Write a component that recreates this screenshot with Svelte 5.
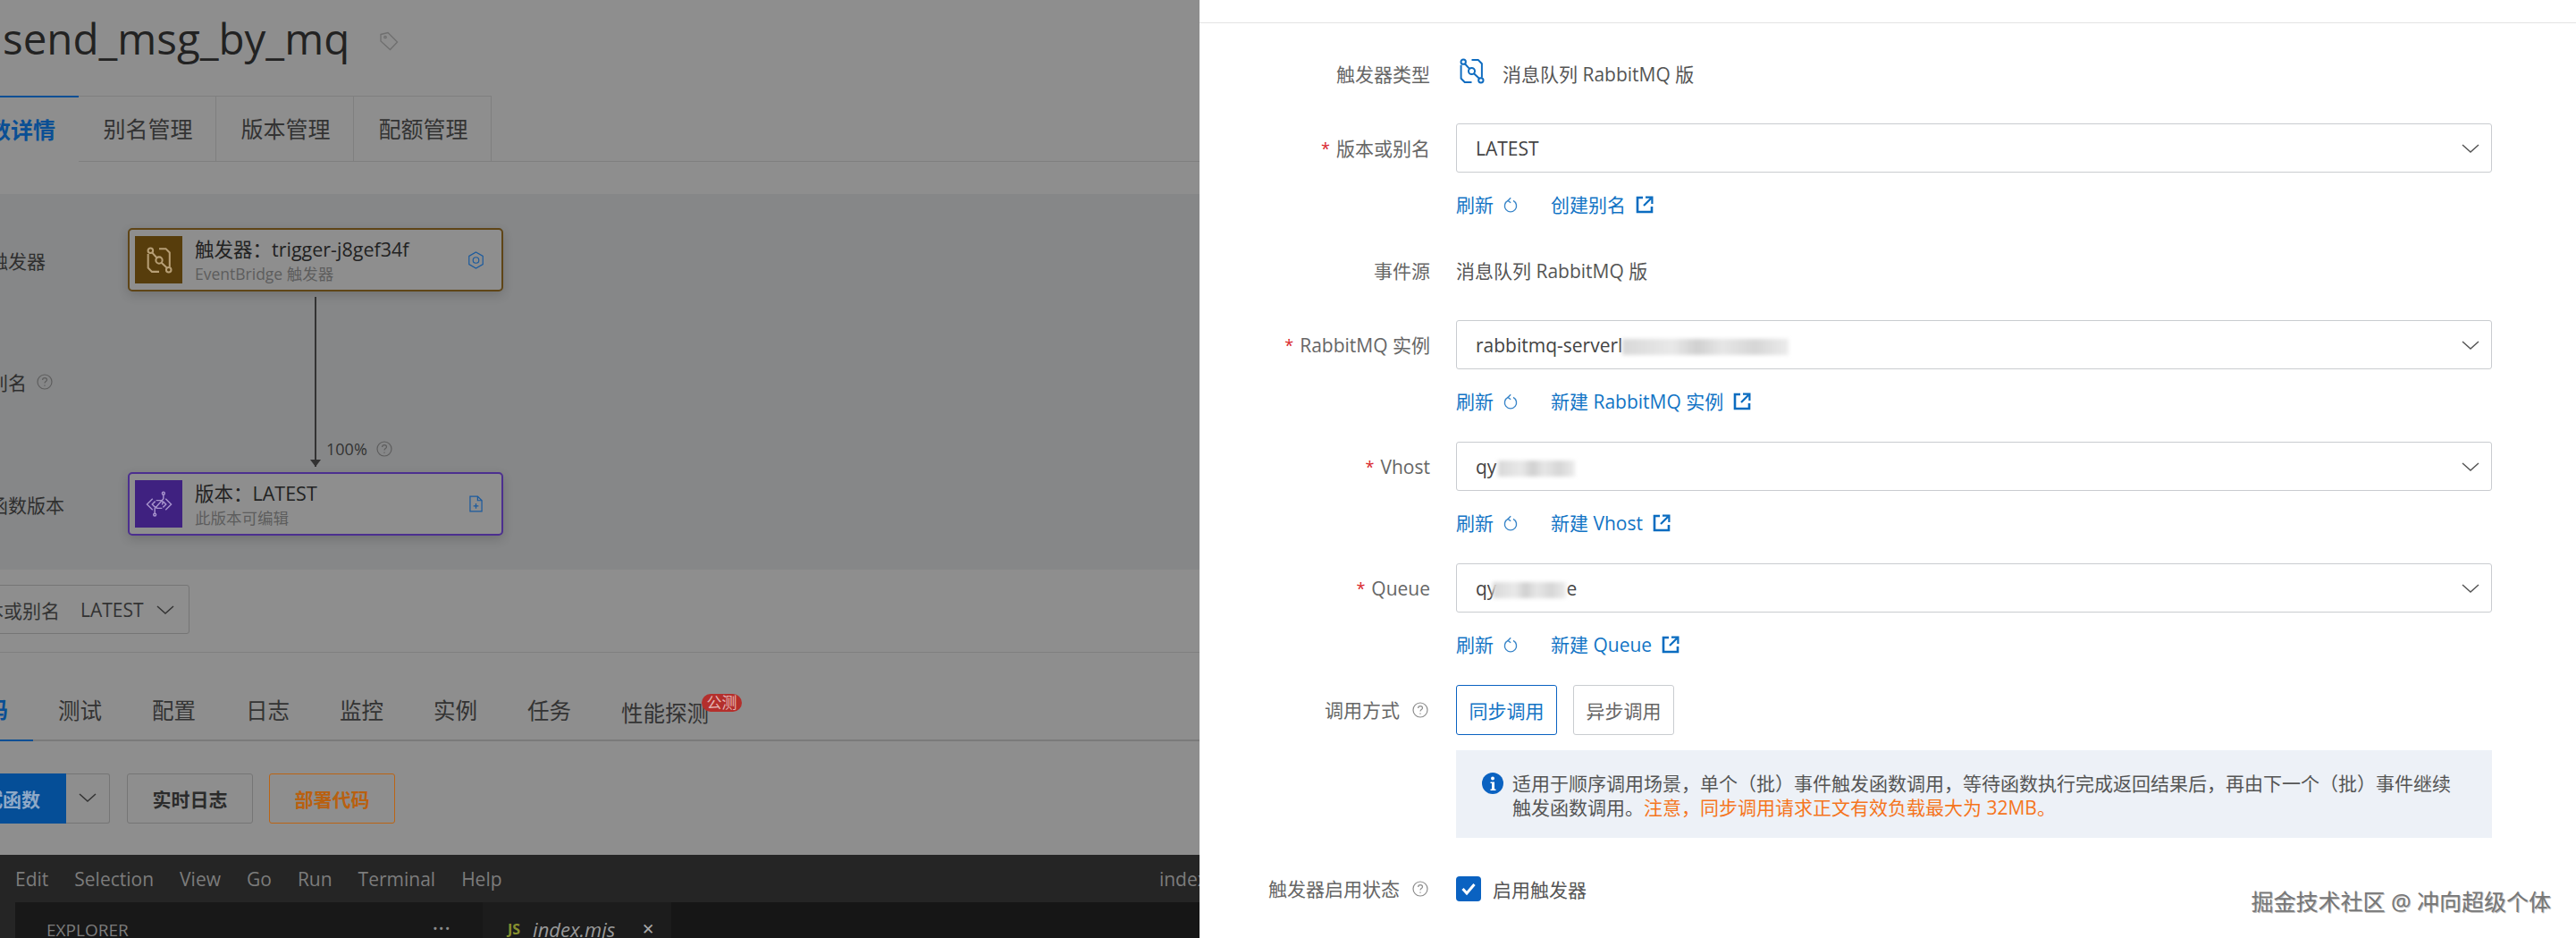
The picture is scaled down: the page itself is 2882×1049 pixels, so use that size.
<script>
  const pageTabs = ['别名管理', '版本管理', '配额管理'];
  const subTabs = ['测试', '配置', '日志', '监控', '实例', '任务'];
  const menus = ['Edit', 'Selection', 'View', 'Go', 'Run', 'Terminal', 'Help'];
</script>

{#snippet help(cls = '')}
  <svg class="help {cls}" viewBox="0 0 18 18" fill="none" stroke="currentColor" stroke-width="1.2">
    <circle cx="9" cy="9" r="8" />
    <path d="M6.6 7c0-1.5 1.1-2.4 2.5-2.4s2.4.9 2.4 2.1c0 1.9-2.5 1.9-2.5 3.9" />
    <path d="M9 12.4v1.4" />
  </svg>
{/snippet}

{#snippet chevron()}
  <svg class="chevron" viewBox="0 0 20 10" fill="none" stroke="currentColor" stroke-width="1.5"><path d="M1 1l9 8 9-8" /></svg>
{/snippet}

{#snippet flowIcon()}
  <svg viewBox="0 0 28 28" fill="none" stroke="currentColor" stroke-width="1.9">
    <circle cx="5" cy="4" r="2.6" />
    <circle cx="14" cy="14" r="3.4" />
    <circle cx="24" cy="24" r="2.6" />
    <path d="M6.6 6l5 5.4M16.4 16.6l5.8 5.4" />
    <path d="M2.5 7.5V22l4 4H14M14 2h7l4 4v15" />
  </svg>
{/snippet}

{#snippet refreshLink()}
  <span class="link">刷新
    <svg class="refresh" viewBox="0 0 16 18" fill="none" stroke="currentColor" stroke-width="1.4">
      <path d="M5 4.4a6.6 6.6 0 1 0 6 0" />
      <path d="M8.2 1.2L5 4.4l3.2 2.4" />
    </svg>
  </span>
{/snippet}

{#snippet extLink(text)}
  <span class="link">{text}
    <svg class="ext" viewBox="0 0 20 20" fill="none" stroke="currentColor" stroke-width="2.6">
      <path d="M8 2H2v16h16v-6" />
      <path d="M9 11l8-8M11 1.6h7.4V9" stroke-width="2.2" />
    </svg>
  </span>
{/snippet}

<div class="screen">
  <!-- page behind the drawer -->
  <section class="page">
    <header class="title-row">
      <h1>send_msg_by_mq</h1>
      <svg class="tag" viewBox="0 0 22 22" fill="none" stroke="currentColor" stroke-width="1.3">
        <path d="M2 3.5L10 1.5l10.5 10.5-8 8.5L2 11z" />
        <circle cx="7" cy="6.5" r="1.2" />
      </svg>
    </header>

    <nav class="page-tabs">
      <span class="page-tab active">函数详情</span>
      {#each pageTabs as tab}
        <span class="page-tab">{tab}</span>
      {/each}
      <span class="page-tabs-rest"></span>
    </nav>

    <div class="diagram">
      <div class="diagram-label">触发器</div>
      <div class="node trigger">
        <div class="node-icon">{@render flowIcon()}</div>
        <div class="node-text">
          <div class="node-title">触发器：trigger-j8gef34f</div>
          <div class="node-sub">EventBridge 触发器</div>
        </div>
        <svg class="node-action" viewBox="0 0 20 22" fill="none" stroke="currentColor" stroke-width="1.3">
          <path d="M10 1l8.5 5v10L10 21l-8.5-5V6z" />
          <circle cx="10" cy="11" r="3.6" />
        </svg>
      </div>

      <div class="diagram-label">别名 {@render help()}</div>
      <div class="edge">
        <span class="edge-line"></span>
        <span class="edge-percent">100% {@render help()}</span>
      </div>

      <div class="diagram-label">函数版本</div>
      <div class="node version">
        <div class="node-icon">
          <svg viewBox="0 0 31 31" fill="none" stroke="currentColor" stroke-width="1.5">
            <path d="M8 9l-6.500 6.500L8 22M11 12l-3.500 3.500L11 19M23 9l6.500 6.500L23 22M20 12l3.500 3.500L20 19" />
            <path d="M20.500 4v5l-10 11.500V26" />
            <path d="M12 11h6l2 2-1 3M19 20h-6l-2-2" />
            <circle cx="20.500" cy="2.800" r="1.500" />
            <circle cx="10.500" cy="27.500" r="1.500" />
          </svg>
        </div>
        <div class="node-text">
          <div class="node-title">版本：LATEST</div>
          <div class="node-sub">此版本可编辑</div>
        </div>
        <svg class="node-action doc" viewBox="0 0 16 20" fill="none" stroke="currentColor" stroke-width="1.3">
          <path d="M1 1h9l5 5v13H1z" />
          <path d="M10 1v5h5M8 9.500v6M5 12.500h6" />
        </svg>
      </div>
    </div>

    <div class="version-select">
      <span>版本或别名</span>
      <span class="version-value">LATEST</span>
      {@render chevron()}
    </div>

    <nav class="sub-tabs">
      <span class="sub-tab active">代码</span>
      {#each subTabs as tab}
        <span class="sub-tab">{tab}</span>
      {/each}
      <span class="sub-tab beta">性能探测<em>公测</em></span>
    </nav>

    <div class="actions">
      <span class="btn-run">测试函数</span>
      <span class="btn-more">{@render chevron()}</span>
      <span class="btn">实时日志</span>
      <span class="btn deploy">部署代码</span>
    </div>

    <div class="ide">
      <div class="ide-menu">
        {#each menus as item}
          <span>{item}</span>
        {/each}
        <span class="ide-file">index.mjs</span>
      </div>
      <div class="ide-body">
        <div class="explorer">
          <span>EXPLORER</span>
          <span class="dots">···</span>
        </div>
        <div class="editor-tab">
          <b>JS</b>
          <i>index.mjs</i>
          <span class="close">✕</span>
        </div>
      </div>
    </div>
  </section>

  <!-- trigger drawer -->
  <aside class="drawer">
    <div class="drawer-top"></div>
    <form class="form">
      <div class="row type-row">
        <div class="label">触发器类型</div>
        <div class="control type-value">
          <span class="type-icon">{@render flowIcon()}</span>
          消息队列 RabbitMQ 版
        </div>
      </div>

      <div class="row select-row">
        <div class="label"><i>*</i>版本或别名</div>
        <div class="select"><span>LATEST</span>{@render chevron()}</div>
      </div>
      <div class="row links">
        <div></div>
        <div class="link-line">{@render refreshLink()}{@render extLink('创建别名')}</div>
      </div>

      <div class="row source-row">
        <div class="label">事件源</div>
        <div class="control">消息队列 RabbitMQ 版</div>
      </div>

      <div class="row select-row instance">
        <div class="label"><i>*</i>RabbitMQ 实例</div>
        <div class="select"><span>rabbitmq-serverl<span class="smudge wide"></span></span>{@render chevron()}</div>
      </div>
      <div class="row links">
        <div></div>
        <div class="link-line">{@render refreshLink()}{@render extLink('新建 RabbitMQ 实例')}</div>
      </div>

      <div class="row select-row">
        <div class="label"><i>*</i>Vhost</div>
        <div class="select"><span>qy<span class="smudge vhost"></span></span>{@render chevron()}</div>
      </div>
      <div class="row links">
        <div></div>
        <div class="link-line">{@render refreshLink()}{@render extLink('新建 Vhost')}</div>
      </div>

      <div class="row select-row">
        <div class="label"><i>*</i>Queue</div>
        <div class="select"><span>qy<span class="smudge queue"></span>e</span>{@render chevron()}</div>
      </div>
      <div class="row links">
        <div></div>
        <div class="link-line">{@render refreshLink()}{@render extLink('新建 Queue')}</div>
      </div>

      <div class="row mode-row">
        <div class="label">调用方式{@render help('label-help')}</div>
        <div class="mode-buttons">
          <span class="mode selected">同步调用</span>
          <span class="mode">异步调用</span>
        </div>
      </div>
      <div class="row alert-row">
        <div></div>
        <div class="alert">
          <svg class="info" viewBox="0 0 24 24">
            <circle cx="12" cy="12" r="12" fill="#0a62c1" />
            <circle cx="12" cy="6.500" r="2" fill="#fff" />
            <path d="M9.500 10.500H14v8h1.500v1.500h-6v-1.500H11v-6.500H9.500z" fill="#fff" />
          </svg>
          <p>适用于顺序调用场景，单个（批）事件触发函数调用，等待函数执行完成返回结果后，再由下一个（批）事件继续触发函数调用。<span class="warn">注意，同步调用请求正文有效负载最大为 32MB。</span></p>
        </div>
      </div>

      <div class="row check-row">
        <div class="label">触发器启用状态{@render help('label-help')}</div>
        <div class="check">
          <svg class="checkbox" viewBox="0 0 28 28">
            <rect width="28" height="28" rx="4" fill="#0a62c1" />
            <path d="M7.500 14l4.500 5 8.500-10" fill="none" stroke="#fff" stroke-width="3" />
          </svg>
          启用触发器
        </div>
      </div>
    </form>
    <div class="watermark">掘金技术社区 @ 冲向超级个体</div>
  </aside>
</div>

<style>
  :global(body) {
    margin: 0;
    background: #fff;
  }

  .screen {
    display: flex;
    width: 2882px;
    height: 1049px;
    overflow: hidden;
    font-family: "Open Sans", "Noto Sans CJK SC", sans-serif;
    font-size: 21px;
  }

  /* dimmed page */
  .page {
    width: 1342px;
    flex: none;
    display: flex;
    flex-direction: column;
    overflow: hidden;
    background: #8e8e8e;
    color: #2b2b2b;
  }

  .page > * {
    flex: none;
  }

  .title-row {
    height: 107px;
    display: flex;
    align-items: flex-start;
    padding-left: 3px;
  }

  h1 {
    margin: 13px 0 0;
    font-size: 47.500px;
    line-height: 60px;
    font-weight: 400;
    color: #222;
  }

  .tag {
    width: 22px;
    height: 22px;
    margin: 35px 0 0 33px;
    color: #6f6f6f;
  }

  .page-tabs {
    display: flex;
    height: 74px;
    margin-left: -66px;
    font-size: 25px;
  }

  .page-tab {
    width: 154px;
    display: flex;
    align-items: center;
    justify-content: center;
    box-sizing: border-box;
    padding: 0 0 2px 2px;
    border: 1px solid #7f7f7f;
    border-left-width: 0;
    color: #333;
  }

  .page-tab.active {
    border: 0;
    border-top: 2px solid #0a4f94;
    color: #0a4f94;
    font-weight: 700;
  }

  .page-tabs-rest {
    flex: 1;
    border-bottom: 1px solid #7f7f7f;
  }

  .diagram {
    margin-top: 36px;
    height: 420px;
    box-sizing: border-box;
    padding: 38px 0 0;
    margin-left: -12px;
    display: grid;
    grid-template-columns: 155px 420px;
    grid-template-rows: 71px 202px 71px;
    align-items: center;
    background: #868788;
    font-size: 21px;
  }

  .diagram-label {
    display: flex;
    align-items: center;
    gap: 11px;
    color: #2f2f2f;
  }

  .node {
    height: 71px;
    box-sizing: border-box;
    display: flex;
    align-items: center;
    padding: 0 19px 0 6px;
    border: 2px solid #5f4517;
    border-radius: 5px;
    background: #8e8e8e;
    box-shadow: 0 4px 12px rgba(0, 0, 0, 0.16);
  }

  .node.version {
    border-color: #4c2f8f;
  }

  .node-icon {
    width: 53px;
    height: 53px;
    flex: none;
    display: flex;
    align-items: center;
    justify-content: center;
    background: #573d0c;
    color: #b79f76;
  }

  .node-icon svg {
    width: 30px;
    height: 30px;
  }

  .version .node-icon {
    background: #3f2180;
    color: #a793cc;
  }

  .node-text {
    flex: 1;
    margin-left: 14px;
  }

  .node-title {
    font-size: 21.500px;
    line-height: 30px;
    color: #222;
  }

  .node-sub {
    font-size: 17.500px;
    line-height: 24px;
    color: #5d5d5d;
  }

  .node-action {
    width: 19px;
    height: 20px;
    color: #1a5a9e;
  }

  .node-action.doc {
    width: 15px;
    height: 19px;
    margin-right: 2px;
  }

  .edge {
    position: relative;
    align-self: stretch;
    display: flex;
    justify-content: center;
    padding: 6px 0;
  }

  .edge-line {
    width: 2px;
    background: #333;
    position: relative;
  }

  .edge-line::after {
    content: '';
    position: absolute;
    left: -5px;
    bottom: 0;
    border: 6px solid transparent;
    border-bottom: 0;
    border-top: 8px solid #333;
  }

  .edge-percent {
    position: absolute;
    left: 222px;
    bottom: 14px;
    display: flex;
    align-items: center;
    gap: 10px;
    font-size: 18px;
    color: #333;
  }

  .help {
    width: 18px;
    height: 18px;
    flex: none;
    color: #5e5e5e;
  }

  .version-select {
    margin: 17px 0 0 -60px;
    width: 272px;
    height: 55px;
    box-sizing: border-box;
    display: flex;
    align-items: center;
    padding: 0 16px 0 21px;
    border: 1px solid #757575;
    border-radius: 3px;
    color: #333;
  }

  .version-value {
    margin-left: 23px;
    flex: 1;
  }

  .version-select .chevron {
    color: #333;
  }

  .sub-tabs {
    margin: 20px 0 0 -68px;
    width: 1410px;
    height: 100px;
    box-sizing: border-box;
    display: flex;
    padding-top: 28px;
    border-top: 1px solid #7f7f7f;
    border-bottom: 2px solid #7a7a7a;
    font-size: 24.500px;
    color: #333;
  }

  .sub-tab {
    padding: 0 28px;
    display: flex;
    align-items: center;
    margin-bottom: -2px;
  }

  .sub-tab.active {
    color: #0a4f94;
    font-weight: 700;
    border-bottom: 2px solid #0a4f94;
  }

  .sub-tab.beta {
    position: relative;
    margin-top: 6px;
  }

  .sub-tab em {
    position: absolute;
    left: 118px;
    top: 12px;
    width: 45px;
    height: 20px;
    border-radius: 10px;
    background: #b42f2c;
    color: #e3b4b2;
    font-size: 17px;
    font-style: normal;
    line-height: 20px;
    text-align: center;
  }

  .actions {
    margin-top: 36px;
    margin-left: -68px;
    height: 56px;
    display: flex;
    font-weight: 700;
  }

  .btn-run {
    width: 142px;
    background: #054e97;
    color: #8fa9c7;
    display: flex;
    align-items: center;
    justify-content: center;
    border-radius: 3px 0 0 3px;
  }

  .btn-more {
    width: 49px;
    box-sizing: border-box;
    display: flex;
    align-items: center;
    justify-content: center;
    border: 1px solid #757575;
    border-left: 0;
    border-radius: 0 3px 3px 0;
    color: #333;
  }

  .btn-more .chevron {
    margin: -2px 0 0;
    color: #333;
  }

  .btn {
    width: 141px;
    margin-left: 19px;
    box-sizing: border-box;
    display: flex;
    align-items: center;
    justify-content: center;
    border: 1px solid #757575;
    border-radius: 3px;
    color: #2b2b2b;
  }

  .btn.deploy {
    margin-left: 18px;
    border-color: #bb6414;
    color: #b9600f;
  }

  .ide {
    margin-top: 35px;
    flex: 1;
    background: #252525;
    color: #7c7c7c;
    display: flex;
    flex-direction: column;
  }

  .ide-menu {
    height: 53px;
    flex: none;
    display: flex;
    align-items: center;
    gap: 29px;
    padding-left: 17px;
    font-size: 21px;
  }

  .ide-file {
    margin-left: auto;
    margin-right: -49px;
  }

  .ide-body {
    flex: 1;
    margin-left: 17px;
    display: flex;
    background: #161616;
    font-size: 19px;
  }

  .explorer {
    width: 523px;
    flex: none;
    box-sizing: border-box;
    display: flex;
    justify-content: space-between;
    padding: 18px 36px 0 35px;
    line-height: 26px;
    background: #181818;
  }

  .dots {
    color: #8c8c8c;
    font-size: 26px;
    line-height: 20px;
  }

  .editor-tab {
    width: 211px;
    box-sizing: border-box;
    display: flex;
    gap: 14px;
    padding: 16px 0 0 28px;
    background: #1c1c1c;
    line-height: 28px;
    font-size: 22px;
    color: #9a9a9a;
  }

  .editor-tab b {
    color: #87902f;
    font-size: 16px;
  }

  .close {
    margin-left: 16px;
    color: #a8a8a8;
    font-size: 17px;
  }

  /* drawer */
  .drawer {
    position: relative;
    flex: 1;
    background: #fff;
    color: #555;
  }

  .drawer-top {
    height: 25px;
    border-bottom: 1px solid #e4e4e4;
  }

  .form {
    padding: 29px 94px 0 0;
  }

  .row {
    display: grid;
    grid-template-columns: 258px 1159px;
    column-gap: 29px;
    align-items: center;
  }

  .label {
    display: flex;
    align-items: center;
    justify-content: flex-end;
    color: #666;
    line-height: 30px;
  }

  .label i {
    margin-right: 7px;
    color: #d9262c;
    font-style: normal;
    font-size: 18px;
  }

  .label-help {
    margin: 0 2px 0 14px;
    color: #8d8d8d;
  }

  .type-row {
    height: 55px;
  }

  .type-value {
    display: flex;
    align-items: center;
  }

  .control {
    line-height: 30px;
    color: #555;
  }

  .type-icon {
    width: 29px;
    height: 29px;
    margin: -7px 20px 0 3px;
    color: #0f6cc0;
  }

  .type-icon svg {
    display: block;
  }

  .select-row {
    margin-top: 28px;
  }

  .select {
    height: 55px;
    box-sizing: border-box;
    display: flex;
    align-items: center;
    justify-content: space-between;
    padding: 0 13px 0 21px;
    border: 1px solid #c9ccd0;
    border-radius: 3px;
    color: #444;
  }

  .chevron {
    width: 20px;
    height: 10px;
    flex: none;
    color: #555;
  }

  .smudge {
    display: inline-block;
    height: 18px;
    vertical-align: -3px;
    background: linear-gradient(90deg, #d8d8d8, #e9e9e9 30%, #d0d0d0 45%, #e6e6e6 60%, #d6d6d6 80%, #ececec);
    filter: blur(2px);
  }

  .smudge.wide {
    width: 186px;
  }

  .smudge.vhost {
    width: 86px;
    margin-left: 2px;
  }

  .smudge.queue {
    width: 82px;
    margin-left: -4px;
  }

  .links {
    margin-top: 21px;
  }

  .link-line {
    display: flex;
    gap: 37px;
    line-height: 30px;
    color: #1274c5;
  }

  .link {
    display: inline-flex;
    align-items: center;
    gap: 11px;
  }

  .refresh {
    width: 16px;
    height: 18px;
    color: #3a86c9;
  }

  .ext {
    width: 20px;
    height: 20px;
    color: #0a6cc0;
  }

  .source-row {
    margin-top: 44px;
  }

  .select-row.instance {
    margin-top: 40px;
  }

  .links + .select-row {
    margin-top: 30px;
  }

  .mode-row {
    margin-top: 30px;
  }

  .mode-buttons {
    display: flex;
    gap: 18px;
  }

  .mode {
    width: 113px;
    height: 56px;
    box-sizing: border-box;
    display: flex;
    align-items: center;
    justify-content: center;
    border: 1px solid #c9ccd0;
    border-radius: 3px;
    color: #666;
  }

  .mode.selected {
    border-color: #0a62c1;
    color: #1274c5;
  }

  .alert-row {
    margin-top: 17px;
  }

  .alert {
    height: 98px;
    box-sizing: border-box;
    display: flex;
    gap: 10px;
    padding: 24px 30px 0 29px;
    background: #edf1f7;
  }

  .info {
    width: 24px;
    height: 24px;
    flex: none;
    margin-top: 1px;
  }

  .alert p {
    margin: 0;
    line-height: 27px;
    color: #555;
  }

  .warn {
    color: #f5751d;
  }

  .check-row {
    margin-top: 42px;
  }

  .check {
    display: flex;
    align-items: center;
    gap: 13px;
    color: #555;
  }

  .checkbox {
    width: 28px;
    height: 28px;
  }

  .watermark {
    position: absolute;
    right: 28px;
    bottom: 24px;
    font-size: 25px;
    line-height: 34px;
    color: #777;
    text-shadow: 1px 1px 0 #bbb;
  }
</style>
